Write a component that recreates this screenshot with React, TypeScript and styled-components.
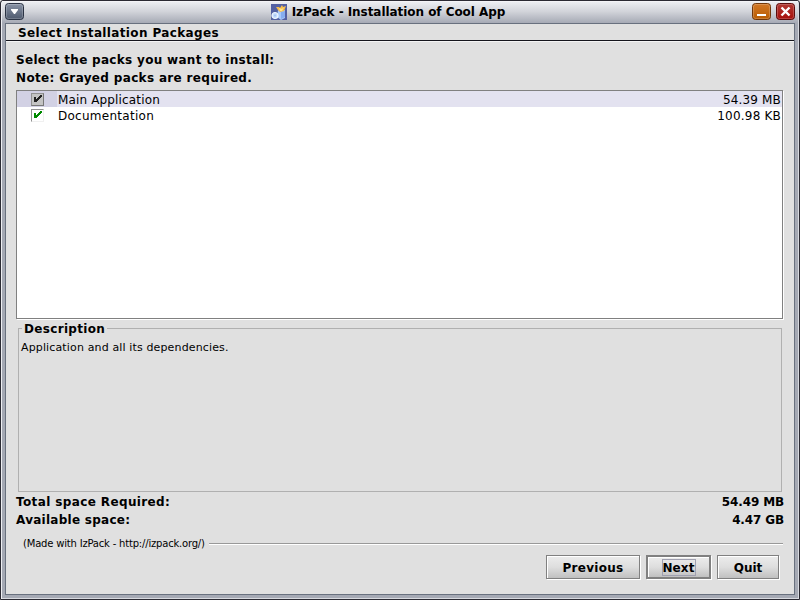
import React from "react";
import styled, { createGlobalStyle } from "styled-components";

const GlobalStyle = createGlobalStyle`
  * { box-sizing: border-box; }
  body { margin: 0; overflow: hidden; background: #e0e0e0; }
`;

const Frame = styled.div`
  width: 800px;
  height: 600px;
  border: 1px solid #2b2a33;
  border-radius: 3px 3px 0 0;
  background: #a5a9b4;
  box-shadow: inset 1px 1px 0 #eeeff3, inset -1px -1px 0 #d8dae0;
  font-family: "DejaVu Sans", sans-serif;
  font-size: 12px;
  color: #000;
  padding: 0 4px 4px;
  display: flex;
  flex-direction: column;
  white-space: pre;
`;

const TitleBar = styled.header`
  height: 22px;
  flex: none;
  margin: 0 -3px;
  padding: 0 3px;
  display: grid;
  grid-template-columns: 19px 1fr 43px;
  align-items: start;
  background: linear-gradient(#eceef2, #d2d4da 45%, #a6aab5);
  border-top: 1px solid #f4f4f7;

  svg { margin-top: 1px; }
`;

const Title = styled.h1`
  margin: 0;
  display: flex;
  justify-content: center;
  gap: 5px;
  font-size: 12px;
  line-height: 20px;

  svg { margin-top: 2px; }
`;

const WindowButtons = styled.div`
  display: flex;
  gap: 5px;
`;

const Panel = styled.main`
  flex: 1;
  border: 1px solid #68707e;
  background: #e0e0e0;
  display: flex;
  flex-direction: column;
`;

const Heading = styled.div`
  height: 17px;
  padding-left: 12px;
  border-bottom: 1px solid #15151c;
  box-shadow: 0 1px #f4f4f4;
  line-height: 18px;
`;

const Body = styled.div`
  padding: 10px 11px 0 10px;
  display: flex;
  flex-direction: column;
`;

const Text = styled.span<{ $size?: number; $spacing?: number; $bold?: boolean }>`
  font-size: ${(p) => p.$size ?? 12}px;
  font-weight: ${(p) => (p.$bold ? 700 : 400)};
  letter-spacing: ${(p) => p.$spacing ?? 0}px;
`;

const Line = styled.div`
  height: 18px;
  line-height: 18px;
  display: flex;
  justify-content: space-between;
`;

const Totals = styled.div`
  margin: 1px -1px 0 0;
`;

const PackList = styled.div`
  height: 229px;
  margin-top: 3px;
  border: 1px solid #808080;
  box-shadow: 1px 1px #fff;
  background: #fff;
  width: 767px;
`;

const PackRow = styled.div<{ $selected?: boolean }>`
  height: 16px;
  display: grid;
  grid-template-columns: 41px 1fr auto;
  grid-template-rows: 16px;
  align-items: start;
  line-height: 18px;
  padding-right: 1px;
  background: ${(p) => (p.$selected ? "linear-gradient(90deg, #d2d1e4 40px, #e3e2f0 40px)" : "#fff")};
`;

const CheckBox = styled.span<{ $disabled?: boolean }>`
  width: 13px;
  height: 13px;
  margin: 2px 0 0 14px;
  display: block;
  border: 1px solid #929292;
  border-right-color: ${(p) => (p.$disabled ? "#777" : "#f0f0f0")};
  border-bottom-color: ${(p) => (p.$disabled ? "#777" : "#f0f0f0")};
  background: ${(p) => (p.$disabled ? "#c4c4c4" : "#fff")};
  svg { display: block; }
`;

const Description = styled.fieldset`
  width: 764px;
  height: 172px;
  margin: 1px 0 0 2px;
  padding: 4px 2px 0;
  border: 1px solid #b0b0b0;
  line-height: 14px;
`;

const Legend = styled.legend`
  margin-left: 1px;
  padding: 0 2px;
  height: 16px;
  line-height: 18px;
`;

const Credits = styled.div`
  margin: 7px 0 0 7px;
  height: 16px;
  line-height: 16px;
  display: flex;
  align-items: center;
  gap: 4px;
`;

const Rule = styled.i`
  flex: 1;
  height: 2px;
  background: linear-gradient(#999 50%, #fff 50%);
`;

const Buttons = styled.div`
  display: flex;
  justify-content: flex-end;
  gap: 6px;
  margin: 3px 4px 0 0;
`;

const Button = styled.button<{ $width: number; $focused?: boolean }>`
  width: ${(p) => p.$width}px;
  height: 24px;
  padding: ${(p) => (p.$focused ? 1 : 2)}px 0 0;
  border: ${(p) => (p.$focused ? 2 : 1)}px solid #808080;
  border-radius: 0;
  box-shadow: 1px 1px #fff, inset 1px 1px #fff;
  background: linear-gradient(#ececec, #dedede 50%, #c0c0c0);
  font-family: inherit;
  color: #000;
  display: flex;
  align-items: center;
  justify-content: center;
`;

const FocusRing = styled.span`
  width: 34px;
  height: 17px;
  padding-top: 1px;
  display: flex;
  align-items: center;
  justify-content: center;
  outline: 1px solid #a0a0b0;
  outline-offset: -1px;
`;

const Check = ({ color }: { color: string }) => (
  <svg width="11" height="11" viewBox="0 0 11 11" shapeRendering="crispEdges">
    <path d="M2 3h2v5h-2zM4 5h1v3h-1zM5 4h1v3h-1zM6 3h1v3h-1zM7 2h1v3h-1zM8 1h1v3h-1zM9 1h1v2h-1z" fill={color} />
  </svg>
);

const iconColors = {
  menu: ["#8a94a7", "#4d586c", "#2b3344"],
  min: ["#d27827", "#b95b00", "#71370a"],
  close: ["#b13a34", "#a80f0b", "#5c0c0c"],
};

function WindowIcon({ kind }: { kind: keyof typeof iconColors }) {
  const [top, bottom, edge] = iconColors[kind];
  return (
    <svg width="19" height="17" viewBox="0 0 19 17">
      <defs>
        <linearGradient id={kind} x2="0" y2="1">
          <stop stopColor={top} />
          <stop offset="1" stopColor={bottom} />
        </linearGradient>
      </defs>
      <rect x=".5" y=".5" width="18" height="16" rx="3" fill={`url(#${kind})`} stroke={edge} />
      <rect x="1.5" y="1.5" width="16" height="14" rx="2" fill="none" stroke="#fff" opacity=".2" />
      {kind === "menu" && <path d="M6 6h7v1l-3 4h-1l-3-4z" fill="#fff" />}
      {kind === "min" && <path d="M5 11h9v2H5z" fill="#fff" />}
      {kind === "close" && <path d="M5.5 4.5l8 8M13.5 4.5l-8 8" stroke="#fff" strokeWidth="2.4" />}
    </svg>
  );
}

const AppIcon = () => (
  <svg width="16" height="16" viewBox="0 0 16 16">
    <path d="M0 0h16v16H0z" fill="#5360a2" />
    <path d="M7 6l3 1 4-1v8l-4 2-4-3z" fill="#a9c9fa" />
    <path d="M10 8l4-1v6l-4 2z" fill="#86aef0" />
    <path d="M5 3l3 0 1 1 2-3 1 2 3-1-2 5-4 1-2-2z" fill="#f7bd4a" />
    <path d="M8 4l3 1 2-2-2 4-2 0z" fill="#ffe58e" />
    <circle cx="4" cy="11.5" r="3" fill="#c5ddff" stroke="#f0f7ff" strokeWidth="1.2" />
    <circle cx="4" cy="11.5" r="1" fill="#a6c2f2" />
  </svg>
);

export default function App() {
  return (
    <>
      <GlobalStyle />
      <Frame>
        <TitleBar>
          <WindowIcon kind="menu" />
          <Title><AppIcon /><Text $bold $spacing={-0.05}>IzPack - Installation of Cool App</Text></Title>
          <WindowButtons><WindowIcon kind="min" /><WindowIcon kind="close" /></WindowButtons>
        </TitleBar>
        <Panel>
          <Heading><Text $bold $spacing={0.36}>Select Installation Packages</Text></Heading>
          <Body>
            <Line><Text $bold $spacing={0.31}>Select the packs you want to install:</Text></Line>
            <Line><Text $bold $spacing={0.34}>Note: Grayed packs are required.</Text></Line>
            <PackList>
              <PackRow $selected>
                <CheckBox $disabled><Check color="#222" /></CheckBox>
                <Text $spacing={0.15}>Main Application</Text><Text $spacing={0.15}>54.39 MB</Text>
              </PackRow>
              <PackRow>
                <CheckBox><Check color="#008a00" /></CheckBox>
                <Text $spacing={0.27}>Documentation</Text><Text $spacing={0.2}>100.98 KB</Text>
              </PackRow>
            </PackList>
            <Description>
              <Legend><Text $bold $spacing={0.33}>Description</Text></Legend>
              <Text $size={11} $spacing={0.14}>Application and all its dependencies.</Text>
            </Description>
            <Totals>
              <Line><Text $bold $spacing={0.38}>Total space Required:</Text><Text $bold $spacing={-0.13}>54.49 MB</Text></Line>
              <Line><Text $bold $spacing={0.27}>Available space:</Text><Text $bold $spacing={-0.13}>4.47 GB</Text></Line>
            </Totals>
            <Credits><Text $size={10} $spacing={-0.19}>(Made with IzPack - http://izpack.org/)</Text><Rule /></Credits>
            <Buttons>
              <Button $width={94}><Text $bold $spacing={0.3}>Previous</Text></Button>
              <Button $width={65} $focused><FocusRing><Text $bold $spacing={0.1}>Next</Text></FocusRing></Button>
              <Button $width={62}><Text $bold>Quit</Text></Button>
            </Buttons>
          </Body>
        </Panel>
      </Frame>
    </>
  );
}
